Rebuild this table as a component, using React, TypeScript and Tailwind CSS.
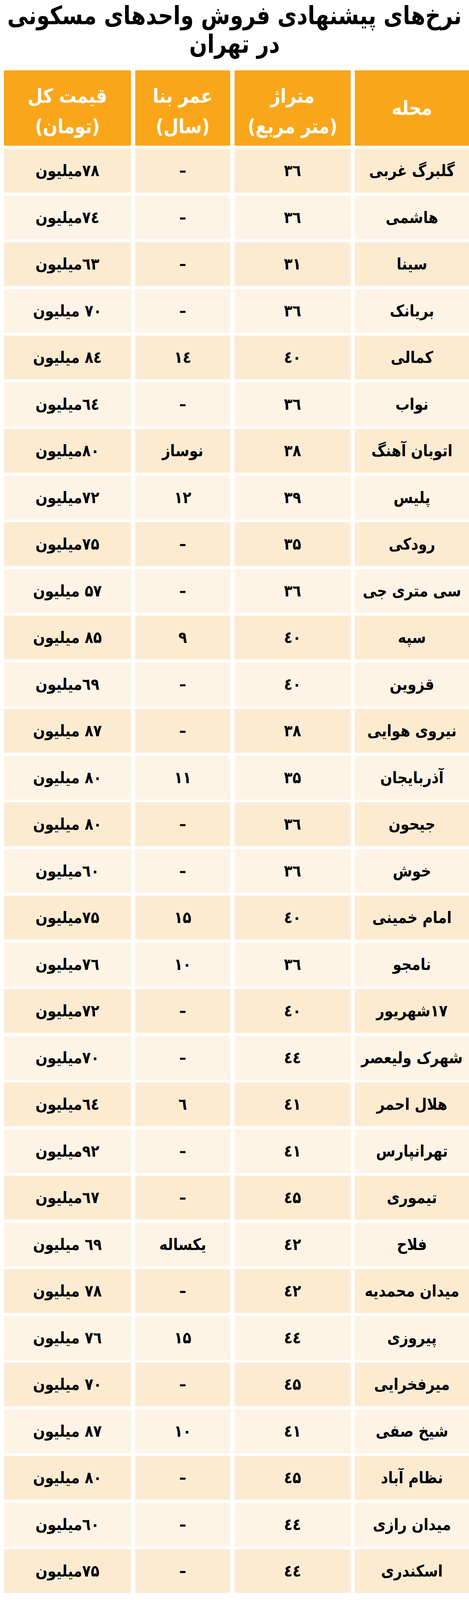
const rows: [string, string, string, string][] = [
  ["گلبرگ غربی", "۳٦", "–", "۷۸میلیون"],
  ["هاشمی", "۳٦", "–", "۷٤میلیون"],
  ["سینا", "۳۱", "–", "٦۳میلیون"],
  ["بریانک", "۳٦", "–", "۷۰ میلیون"],
  ["کمالی", "٤۰", "۱٤", "۸٤ میلیون"],
  ["نواب", "۳٦", "–", "٦٤میلیون"],
  ["اتوبان آهنگ", "۳۸", "نوساز", "۸۰میلیون"],
  ["پلیس", "۳۹", "۱۲", "۷۲میلیون"],
  ["رودکی", "۳۵", "–", "۷۵میلیون"],
  ["سی متری جی", "۳٦", "–", "۵۷ میلیون"],
  ["سپه", "٤۰", "۹", "۸۵ میلیون"],
  ["قزوین", "٤۰", "–", "٦۹میلیون"],
  ["نیروی هوایی", "۳۸", "–", "۸۷ میلیون"],
  ["آذربایجان", "۳۵", "۱۱", "۸۰ میلیون"],
  ["جیحون", "۳٦", "–", "۸۰ میلیون"],
  ["خوش", "۳٦", "–", "٦۰میلیون"],
  ["امام خمینی", "٤۰", "۱۵", "۷۵میلیون"],
  ["نامجو", "۳٦", "۱۰", "۷٦میلیون"],
  ["۱۷شهریور", "٤۰", "–", "۷۲میلیون"],
  ["شهرک ولیعصر", "٤٤", "–", "۷۰میلیون"],
  ["هلال احمر", "٤۱", "٦", "٦٤میلیون"],
  ["تهرانپارس", "٤۱", "–", "۹۲میلیون"],
  ["تیموری", "٤۵", "–", "٦۷میلیون"],
  ["فلاح", "٤۲", "یکساله", "٦۹ میلیون"],
  ["میدان محمدیه", "٤۲", "–", "۷۸ میلیون"],
  ["پیروزی", "٤٤", "۱۵", "۷٦ میلیون"],
  ["میرفخرایی", "٤۵", "–", "۷۰ میلیون"],
  ["شیخ صفی", "٤۱", "۱۰", "۸۷ میلیون"],
  ["نظام آباد", "٤۵", "–", "۸۰ میلیون"],
  ["میدان رازی", "٤٤", "–", "٦۰میلیون"],
  ["اسکندری", "٤٤", "–", "۷۵میلیون"],
];

const HeadCell = ({ top, bottom }: { top: string; bottom?: string }) => (
  <div
    className={`flex h-[193px] flex-col items-center justify-center gap-[34px] bg-[#faa61a] text-[44px] font-bold leading-none text-white ${
      bottom ? "pt-4" : ""
    }`}
  >
    <span className="scale-y-[1.15]">{top}</span>
    {bottom && <span className="scale-y-[1.15]">{bottom}</span>}
  </div>
);

export default function App() {
  return (
    <div
      dir="rtl"
      className="w-[1200px] bg-white pb-2 text-black"
      style={{ fontFamily: '"DejaVu Sans", sans-serif' }}
    >
      <h1 className="flex h-[180px] flex-col items-center gap-[19px] pt-[13px] text-center text-[54px] font-bold leading-none tracking-tight">
        <span className="scale-y-[1.2]">نرخ‌های پیشنهادی فروش واحدهای مسکونی</span>
        <span className="scale-y-[1.2]">در تهران</span>
      </h1>

      <div className="grid grid-cols-[292px_297px_243px_325px] gap-x-[11px] pl-[12px]">
        <HeadCell top="محله" />
        <HeadCell top="متراژ" bottom="(متر مربع)" />
        <HeadCell top="عمر بنا" bottom="(سال)" />
        <HeadCell top="قیمت کل" bottom="(تومان)" />
      </div>

      <div className="mt-[8px] flex flex-col gap-y-[7.5px]">
        {rows.map((r, i) => (
          <div
            key={i}
            className="grid h-[112px] grid-cols-[292px_297px_243px_325px] gap-x-[11px] pl-[12px] text-[36px] font-bold leading-none"
          >
            {r.map((c, j) => (
              <div
                key={j}
                className={`flex items-center justify-center ${
                  i % 2 === 0 ? "bg-[#fdebd1]" : "bg-[#fef4e6]"
                }`}
              >
                <span className="scale-y-[1.15]">{c}</span>
              </div>
            ))}
          </div>
        ))}
      </div>
    </div>
  );
}
